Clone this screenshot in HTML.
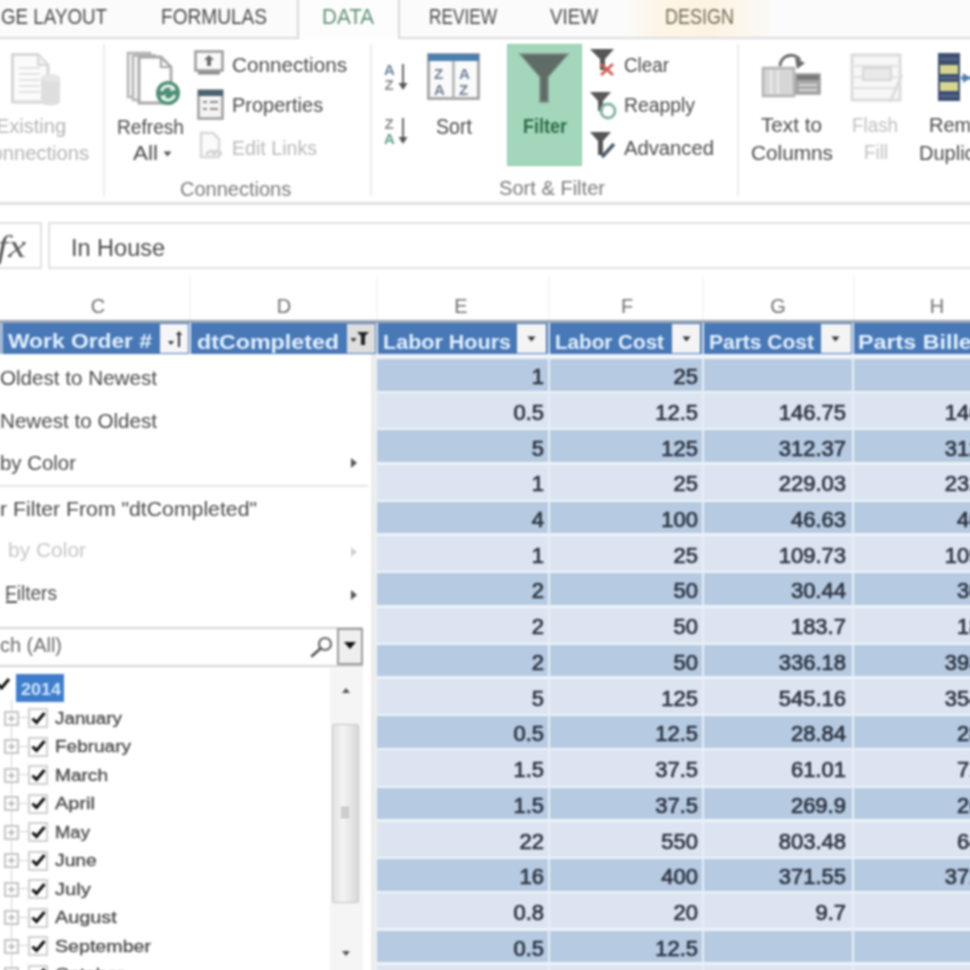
<!DOCTYPE html>
<html><head><meta charset="utf-8"><style>
html,body{margin:0;padding:0;}
body{width:970px;height:970px;overflow:hidden;position:relative;background:#fff;font-family:"Liberation Sans",sans-serif;}
.b{position:absolute;}
.t{position:absolute;white-space:nowrap;line-height:1;transform-origin:0 0;}
svg.b{overflow:visible;}
#w{position:absolute;left:-12px;top:-12px;width:994px;height:994px;overflow:hidden;filter:blur(1px);background:#fff;}
#c{position:absolute;left:12px;top:12px;width:970px;height:970px;}
</style></head><body>
<div id="w"><div id="c"><div class="b" style="left:-12.0px;top:-12.0px;width:994.0px;height:50.0px;background:#fbfbfb"></div>
<div class="b" style="left:624.0px;top:-12.0px;width:146.0px;height:50.0px;background:linear-gradient(90deg,#fbfbfb 0%,#fdf6e8 20%,#fdf3e2 60%,#fbfaf6 100%)"></div>
<div class="b" style="left:-12.0px;top:37.0px;width:994.0px;height:2.0px;background:#dcdcdc"></div>
<div class="b" style="left:297.0px;top:-12.0px;width:103.0px;height:51.0px;background:#fdfdfd;border-left:2px solid #d8d8d8;border-right:2px solid #d8d8d8;box-sizing:border-box"></div>
<div class="t" style="left:1.0px;top:6.1px;font-size:22px;color:#4a4a4a;font-weight:400;font-style:normal;font-family:'Liberation Sans',sans-serif;transform:scaleX(0.8528);">GE LAYOUT</div>
<div class="t" style="left:161.0px;top:6.1px;font-size:22px;color:#4a4a4a;font-weight:400;font-style:normal;font-family:'Liberation Sans',sans-serif;transform:scaleX(0.8672);">FORMULAS</div>
<div class="t" style="left:322.0px;top:6.1px;font-size:22px;color:#5f8f73;font-weight:400;font-style:normal;font-family:'Liberation Sans',sans-serif;transform:scaleX(0.9384);">DATA</div>
<div class="t" style="left:429.0px;top:6.1px;font-size:22px;color:#4a4a4a;font-weight:400;font-style:normal;font-family:'Liberation Sans',sans-serif;transform:scaleX(0.7835);">REVIEW</div>
<div class="t" style="left:550.0px;top:6.1px;font-size:22px;color:#4a4a4a;font-weight:400;font-style:normal;font-family:'Liberation Sans',sans-serif;transform:scaleX(0.8537);">VIEW</div>
<div class="t" style="left:665.0px;top:6.1px;font-size:22px;color:#6e6e55;font-weight:400;font-style:normal;font-family:'Liberation Sans',sans-serif;transform:scaleX(0.8180);">DESIGN</div>
<div class="b" style="left:-12.0px;top:39.0px;width:994.0px;height:163.0px;background:#ffffff"></div>
<div class="b" style="left:-12.0px;top:202.0px;width:994.0px;height:3.0px;background:#e0e0e0"></div>
<div class="b" style="left:103.0px;top:44.0px;width:2.0px;height:152.0px;background:#ececec"></div>
<div class="b" style="left:370.0px;top:44.0px;width:2.0px;height:152.0px;background:#ececec"></div>
<div class="b" style="left:737.0px;top:44.0px;width:2.0px;height:152.0px;background:#ececec"></div>
<div class="t" style="left:-4.0px;top:115.9px;font-size:20px;color:#b4b4b4;font-weight:400;font-style:normal;font-family:'Liberation Sans',sans-serif;">Existing</div>
<div class="t" style="left:-23.0px;top:142.9px;font-size:20px;color:#b4b4b4;font-weight:400;font-style:normal;font-family:'Liberation Sans',sans-serif;transform:scaleX(1.0073);">Connections</div>
<div class="t" style="left:117.0px;top:116.9px;font-size:20px;color:#4a4a4a;font-weight:400;font-style:normal;font-family:'Liberation Sans',sans-serif;transform:scaleX(0.9567);">Refresh</div>
<div class="t" style="left:133.0px;top:142.9px;font-size:20px;color:#4a4a4a;font-weight:400;font-style:normal;font-family:'Liberation Sans',sans-serif;transform:scaleX(1.1247);">All</div>
<svg class="b" style="left:163px;top:151px" width="9" height="6" viewBox="0 0 9 6"><path d="M0.5 0.5 L8.5 0.5 L4.5 5.5 Z" fill="#555"/></svg>
<div class="t" style="left:232.0px;top:54.9px;font-size:20px;color:#4a4a4a;font-weight:400;font-style:normal;font-family:'Liberation Sans',sans-serif;transform:scaleX(1.0343);">Connections</div>
<div class="t" style="left:232.0px;top:94.9px;font-size:20px;color:#4a4a4a;font-weight:400;font-style:normal;font-family:'Liberation Sans',sans-serif;">Properties</div>
<div class="t" style="left:232.0px;top:137.9px;font-size:20px;color:#b8b8b8;font-weight:400;font-style:normal;font-family:'Liberation Sans',sans-serif;transform:scaleX(0.9803);">Edit Links</div>
<div class="t" style="left:180.0px;top:178.9px;font-size:20px;color:#7a7a7a;font-weight:400;font-style:normal;font-family:'Liberation Sans',sans-serif;">Connections</div>
<div class="t" style="left:436.0px;top:116.1px;font-size:22px;color:#4a4a4a;font-weight:400;font-style:normal;font-family:'Liberation Sans',sans-serif;transform:scaleX(0.8922);">Sort</div>
<div class="t" style="left:624.0px;top:54.9px;font-size:20px;color:#4a4a4a;font-weight:400;font-style:normal;font-family:'Liberation Sans',sans-serif;transform:scaleX(0.9415);">Clear</div>
<div class="t" style="left:624.0px;top:94.9px;font-size:20px;color:#4a4a4a;font-weight:400;font-style:normal;font-family:'Liberation Sans',sans-serif;transform:scaleX(0.9675);">Reapply</div>
<div class="t" style="left:624.0px;top:137.9px;font-size:20px;color:#4a4a4a;font-weight:400;font-style:normal;font-family:'Liberation Sans',sans-serif;transform:scaleX(1.0117);">Advanced</div>
<div class="t" style="left:499.0px;top:177.9px;font-size:20px;color:#7a7a7a;font-weight:400;font-style:normal;font-family:'Liberation Sans',sans-serif;transform:scaleX(1.0040);">Sort &amp; Filter</div>
<div class="t" style="left:761.0px;top:114.9px;font-size:20px;color:#4a4a4a;font-weight:400;font-style:normal;font-family:'Liberation Sans',sans-serif;transform:scaleX(1.0354);">Text to</div>
<div class="t" style="left:751.0px;top:142.9px;font-size:20px;color:#4a4a4a;font-weight:400;font-style:normal;font-family:'Liberation Sans',sans-serif;transform:scaleX(1.0390);">Columns</div>
<div class="t" style="left:852.0px;top:114.9px;font-size:20px;color:#c0c0c0;font-weight:400;font-style:normal;font-family:'Liberation Sans',sans-serif;transform:scaleX(0.9405);">Flash</div>
<div class="t" style="left:864.0px;top:141.9px;font-size:20px;color:#c0c0c0;font-weight:400;font-style:normal;font-family:'Liberation Sans',sans-serif;transform:scaleX(0.9394);">Fill</div>
<div class="t" style="left:929.0px;top:114.9px;font-size:20px;color:#4a4a4a;font-weight:400;font-style:normal;font-family:'Liberation Sans',sans-serif;">Remove</div>
<div class="t" style="left:919.0px;top:142.9px;font-size:20px;color:#4a4a4a;font-weight:400;font-style:normal;font-family:'Liberation Sans',sans-serif;">Duplicates</div>
<svg class="b" style="left:10px;top:52px" width="52" height="56" viewBox="0 0 52 56"><path d="M2.5 2.5 H28 L38 13 V50 H2.5 Z" fill="#fbfbfb" stroke="#d6d6d6" stroke-width="3"/><path d="M28 2.5 V13 H38" fill="#eee" stroke="#d6d6d6" stroke-width="2"/><path d="M9 16 H30 M9 22 H30 M9 28 H30 M9 34 H30 M9 40 H30" stroke="#e2e2e2" stroke-width="2"/><path d="M31 26 Q40.5 21 50 26 V51 Q40.5 56 31 51 Z" fill="#dedede"/><ellipse cx="40.5" cy="26" rx="9.5" ry="4" fill="#e6e6e6"/></svg>
<svg class="b" style="left:126px;top:51px" width="60" height="56" viewBox="0 0 60 56"><path d="M2 2 H24 V46 H2 Z" fill="#f6f6f6" stroke="#b4b4b4" stroke-width="2.5"/><path d="M7 4.5 H29 V49 H7 Z" fill="#f6f6f6" stroke="#b4b4b4" stroke-width="2.5"/><path d="M13 6 H35 L45 16 V52 H13 Z" fill="#ffffff" stroke="#a8a8a8" stroke-width="2.8"/><path d="M35 6 V16 H45" fill="none" stroke="#a8a8a8" stroke-width="2.2"/><circle cx="42" cy="42" r="12" fill="#4f8f74"/><path d="M35.5 40 A7 7 0 0 1 48 38" fill="none" stroke="#e9f6ee" stroke-width="3"/><path d="M48.5 44 A7 7 0 0 1 36 46" fill="none" stroke="#e9f6ee" stroke-width="3"/><path d="M45 34 L50 39 L44 40 Z" fill="#e9f6ee"/><path d="M39 50 L34 45 L40 44 Z" fill="#e9f6ee"/></svg>
<svg class="b" style="left:194px;top:50px" width="30" height="26" viewBox="0 0 30 26"><rect x="1.5" y="1.5" width="27" height="19" fill="#fafafa" stroke="#9a9a9a" stroke-width="2.5"/><path d="M15 5 L20 10 H17 V16 H13 V10 H10 Z" fill="#6a6a6a"/><path d="M4 23 H26" stroke="#8a8a8a" stroke-width="3"/></svg>
<svg class="b" style="left:197px;top:89px" width="27" height="31" viewBox="0 0 27 31"><rect x="1.5" y="1.5" width="24" height="28" fill="#f4f4f4" stroke="#9c9c9c" stroke-width="2.5"/><rect x="1" y="1" width="25" height="6" fill="#4a6272"/><path d="M6 13 H10 M13 13 H21 M6 20 H10 M13 20 H21" stroke="#8a8a8a" stroke-width="2.2"/></svg>
<svg class="b" style="left:199px;top:131px" width="26" height="30" viewBox="0 0 26 30"><path d="M2 2 H14 L20 8 V26 H2 Z" fill="#fbfbfb" stroke="#d8d8d8" stroke-width="2.5"/><path d="M8 24 a4 4 0 0 1 8 0 M14 24 a4 4 0 0 1 8 0" fill="none" stroke="#cfcfcf" stroke-width="2.5"/></svg>
<svg class="b" style="left:384px;top:62px" width="28" height="32" viewBox="0 0 28 32"><text x="0" y="13" font-family="Liberation Sans" font-size="15" font-weight="700" fill="#6a7f99">A</text><text x="0.5" y="28" font-family="Liberation Sans" font-size="15" font-weight="700" fill="#8a8a8a">Z</text><path d="M19 2 V24" stroke="#666" stroke-width="2"/><path d="M14.5 21 L19 28 L23.5 21 Z" fill="#555"/></svg>
<svg class="b" style="left:384px;top:116px" width="28" height="32" viewBox="0 0 28 32"><text x="0.5" y="13" font-family="Liberation Sans" font-size="15" font-weight="700" fill="#8a8a8a">Z</text><text x="0" y="28" font-family="Liberation Sans" font-size="15" font-weight="700" fill="#5f9f8c">A</text><path d="M19 2 V24" stroke="#666" stroke-width="2"/><path d="M14.5 21 L19 28 L23.5 21 Z" fill="#555"/></svg>
<svg class="b" style="left:427px;top:53px" width="53" height="47" viewBox="0 0 53 47"><rect x="1.5" y="1.5" width="50" height="44" fill="#fafafa" stroke="#a8a8a8" stroke-width="3"/><rect x="1" y="1" width="51" height="7" fill="#4a7fae"/><path d="M26.5 8 V45" stroke="#b0b0b0" stroke-width="2.5"/><text x="7" y="26" font-family="Liberation Sans" font-size="15" font-weight="700" fill="#6f7f92">Z</text><text x="7" y="42" font-family="Liberation Sans" font-size="15" font-weight="700" fill="#6f7f92">A</text><text x="32" y="26" font-family="Liberation Sans" font-size="15" font-weight="700" fill="#6f7f92">A</text><text x="32" y="42" font-family="Liberation Sans" font-size="15" font-weight="700" fill="#6f7f92">Z</text></svg>
<div class="b" style="left:507.0px;top:44.0px;width:75.0px;height:122.0px;background:#a3d6bb;border:1.5px solid #93cbac;box-sizing:border-box"></div>
<svg class="b" style="left:518px;top:52px" width="52" height="52" viewBox="0 0 52 52"><path d="M2 2 H50 L30 25 V50 H22 V25 Z" fill="#5f6c66" stroke="#7f8f88" stroke-width="1.5"/></svg>
<div class="t" style="left:523.0px;top:115.9px;font-size:20px;color:#2c6b46;font-weight:700;font-style:normal;font-family:'Liberation Sans',sans-serif;transform:scaleX(0.8999);">Filter</div>
<svg class="b" style="left:589px;top:48px" width="28" height="30" viewBox="0 0 28 30"><path d="M1 1 H25 L16 11 V22 H11 V11 Z" fill="#565656"/><path d="M12 16 L24 27 M24 16 L12 27" stroke="#d0605a" stroke-width="3"/></svg>
<svg class="b" style="left:589px;top:91px" width="28" height="30" viewBox="0 0 28 30"><path d="M1 1 H22 L14 10 V20 H9 V10 Z" fill="#585858"/><circle cx="19" cy="20" r="7" fill="none" stroke="#7fb59b" stroke-width="2.8"/></svg>
<svg class="b" style="left:589px;top:131px" width="28" height="30" viewBox="0 0 28 30"><path d="M1 1 H22 L14 10 V24 H9 V10 Z" fill="#555"/><path d="M13 26 L25 13" stroke="#4a5a6e" stroke-width="3.5"/></svg>
<svg class="b" style="left:760px;top:52px" width="62" height="48" viewBox="0 0 62 48"><path d="M20 14 A11 11 0 0 1 40 8" fill="none" stroke="#6a6a6a" stroke-width="3"/><path d="M35 6 L45 11 L37 17 Z" fill="#6a6a6a"/><rect x="3" y="16" width="31" height="28" fill="#d6d6d6" stroke="#b2b2b2" stroke-width="2.5"/><path d="M11 18 V42 M18 18 V42" stroke="#ececec" stroke-width="2"/><rect x="36" y="22" width="24" height="20" fill="#a6a6a6" stroke="#9a9a9a" stroke-width="1.5"/><rect x="37" y="23" width="22" height="5" fill="#7a7a7a"/><path d="M39 33 H57 M39 38 H57" stroke="#d8d8d8" stroke-width="2"/></svg>
<svg class="b" style="left:850px;top:53px" width="56" height="50" viewBox="0 0 56 50"><rect x="2" y="2" width="48" height="45" fill="#f7f7f7" stroke="#dcdcdc" stroke-width="3"/><path d="M4 13 H48 M4 24 H48 M4 35 H48" stroke="#e0e0e0" stroke-width="2"/><rect x="13" y="15" width="28" height="12" fill="#e9e9e9" stroke="#d6d6d6" stroke-width="2"/><path d="M52 22 L40 49" stroke="#dcdcdc" stroke-width="3"/></svg>
<svg class="b" style="left:937px;top:52px" width="34" height="50" viewBox="0 0 34 50"><rect x="1" y="1" width="22" height="48" fill="#3d4f73"/><rect x="3" y="13" width="18" height="9" fill="#d7d68e"/><rect x="3" y="30" width="18" height="9" fill="#d7d68e"/><path d="M3 7 H21 M3 26 H21 M3 44 H21" stroke="#5a6a8a" stroke-width="2"/><path d="M24 26 H34" stroke="#4a7fae" stroke-width="3"/><path d="M26 21 L33 26 L26 31" fill="#4a7fae"/></svg>
<div class="b" style="left:-12.0px;top:205.0px;width:994.0px;height:65.0px;background:#ffffff"></div>
<div class="b" style="left:-14.0px;top:222.0px;width:56.0px;height:47.0px;background:#fff;border:2.5px solid #e0e0e0;box-sizing:border-box"></div>
<div class="b" style="left:48.0px;top:222.0px;width:950.0px;height:47.0px;background:#fff;border:2.5px solid #e0e0e0;box-sizing:border-box"></div>
<div class="t" style="left:-3.0px;top:231.4px;font-size:31px;color:#555;font-weight:400;font-style:italic;font-family:'Liberation Serif',serif;transform:scaleX(1.2963);">fx</div>
<div class="t" style="left:71.0px;top:236.7px;font-size:23px;color:#4a4a4a;font-weight:400;font-style:normal;font-family:'Liberation Sans',sans-serif;transform:scaleX(1.0211);">In House</div>
<div class="b" style="left:-12.0px;top:270.0px;width:994.0px;height:51.0px;background:#ffffff"></div>
<div class="b" style="left:189.0px;top:276.0px;width:2.0px;height:45.0px;background:#f5f5f5"></div>
<div class="b" style="left:376.0px;top:276.0px;width:2.0px;height:45.0px;background:#f5f5f5"></div>
<div class="b" style="left:548.0px;top:276.0px;width:2.0px;height:45.0px;background:#f5f5f5"></div>
<div class="b" style="left:702.0px;top:276.0px;width:2.0px;height:45.0px;background:#f5f5f5"></div>
<div class="b" style="left:853.0px;top:276.0px;width:2.0px;height:45.0px;background:#f5f5f5"></div>
<div class="t" style="left:90.8px;top:295.9px;font-size:20px;color:#707070;font-weight:400;font-style:normal;font-family:'Liberation Sans',sans-serif;">C</div>
<div class="t" style="left:276.8px;top:295.9px;font-size:20px;color:#707070;font-weight:400;font-style:normal;font-family:'Liberation Sans',sans-serif;">D</div>
<div class="t" style="left:454.3px;top:295.9px;font-size:20px;color:#707070;font-weight:400;font-style:normal;font-family:'Liberation Sans',sans-serif;">E</div>
<div class="t" style="left:620.9px;top:295.9px;font-size:20px;color:#707070;font-weight:400;font-style:normal;font-family:'Liberation Sans',sans-serif;">F</div>
<div class="t" style="left:770.2px;top:295.9px;font-size:20px;color:#707070;font-weight:400;font-style:normal;font-family:'Liberation Sans',sans-serif;">G</div>
<div class="t" style="left:929.8px;top:295.9px;font-size:20px;color:#707070;font-weight:400;font-style:normal;font-family:'Liberation Sans',sans-serif;">H</div>
<div class="b" style="left:376.0px;top:322.0px;width:620.0px;height:680.0px;background:#eef3f9"></div>
<div class="b" style="left:-12.0px;top:323.0px;width:994.0px;height:31.0px;background:#4878b6"></div>
<div class="b" style="left:-12.0px;top:320.0px;width:994.0px;height:3.0px;background:#9aa6b6"></div>
<div class="b" style="left:377.0px;top:359.0px;width:620.0px;height:31.5px;background:#b6cae1"></div>
<div class="b" style="left:377.0px;top:393.2px;width:620.0px;height:35.2px;background:#dbe4f0"></div>
<div class="b" style="left:377.0px;top:430.4px;width:620.0px;height:31.5px;background:#b6cae1"></div>
<div class="b" style="left:377.0px;top:464.7px;width:620.0px;height:35.2px;background:#dbe4f0"></div>
<div class="b" style="left:377.0px;top:501.9px;width:620.0px;height:31.5px;background:#b6cae1"></div>
<div class="b" style="left:377.0px;top:536.1px;width:620.0px;height:35.2px;background:#dbe4f0"></div>
<div class="b" style="left:377.0px;top:573.3px;width:620.0px;height:31.5px;background:#b6cae1"></div>
<div class="b" style="left:377.0px;top:607.5px;width:620.0px;height:35.2px;background:#dbe4f0"></div>
<div class="b" style="left:377.0px;top:644.8px;width:620.0px;height:31.5px;background:#b6cae1"></div>
<div class="b" style="left:377.0px;top:679.0px;width:620.0px;height:35.2px;background:#dbe4f0"></div>
<div class="b" style="left:377.0px;top:716.2px;width:620.0px;height:31.5px;background:#b6cae1"></div>
<div class="b" style="left:377.0px;top:750.4px;width:620.0px;height:35.2px;background:#dbe4f0"></div>
<div class="b" style="left:377.0px;top:787.6px;width:620.0px;height:31.5px;background:#b6cae1"></div>
<div class="b" style="left:377.0px;top:821.9px;width:620.0px;height:35.2px;background:#dbe4f0"></div>
<div class="b" style="left:377.0px;top:859.1px;width:620.0px;height:31.5px;background:#b6cae1"></div>
<div class="b" style="left:377.0px;top:893.3px;width:620.0px;height:35.2px;background:#dbe4f0"></div>
<div class="b" style="left:377.0px;top:930.5px;width:620.0px;height:31.5px;background:#b6cae1"></div>
<div class="b" style="left:377.0px;top:964.7px;width:620.0px;height:35.2px;background:#dbe4f0"></div>
<div class="b" style="left:377.0px;top:1002.0px;width:620.0px;height:31.5px;background:#b6cae1"></div>
<div class="b" style="left:548.0px;top:355.0px;width:2.0px;height:650.0px;background:#e9eff7"></div>
<div class="b" style="left:702.0px;top:355.0px;width:2.0px;height:650.0px;background:#e9eff7"></div>
<div class="b" style="left:852.0px;top:355.0px;width:2.0px;height:650.0px;background:#e9eff7"></div>
<div class="b" style="left:189.0px;top:323.0px;width:2.0px;height:31.0px;background:#dfe6ef"></div>
<div class="b" style="left:376.0px;top:323.0px;width:2.0px;height:31.0px;background:#dfe6ef"></div>
<div class="b" style="left:548.0px;top:323.0px;width:2.0px;height:31.0px;background:#dfe6ef"></div>
<div class="b" style="left:702.0px;top:323.0px;width:2.0px;height:31.0px;background:#dfe6ef"></div>
<div class="b" style="left:852.0px;top:323.0px;width:2.0px;height:31.0px;background:#dfe6ef"></div>
<div class="t" style="left:531.8px;top:366.1px;font-size:22px;color:#2b3240;font-weight:400;font-style:normal;font-family:'Liberation Sans',sans-serif;-webkit-text-stroke:0.7px #2b3240;">1</div>
<div class="t" style="left:673.5px;top:366.1px;font-size:22px;color:#2b3240;font-weight:400;font-style:normal;font-family:'Liberation Sans',sans-serif;-webkit-text-stroke:0.7px #2b3240;">25</div>
<div class="t" style="left:513.4px;top:401.8px;font-size:22px;color:#2b3240;font-weight:400;font-style:normal;font-family:'Liberation Sans',sans-serif;-webkit-text-stroke:0.7px #2b3240;">0.5</div>
<div class="t" style="left:655.2px;top:401.8px;font-size:22px;color:#2b3240;font-weight:400;font-style:normal;font-family:'Liberation Sans',sans-serif;-webkit-text-stroke:0.7px #2b3240;">12.5</div>
<div class="t" style="left:778.7px;top:401.8px;font-size:22px;color:#2b3240;font-weight:400;font-style:normal;font-family:'Liberation Sans',sans-serif;-webkit-text-stroke:0.7px #2b3240;">146.75</div>
<div class="t" style="left:944.7px;top:401.8px;font-size:22px;color:#2b3240;font-weight:400;font-style:normal;font-family:'Liberation Sans',sans-serif;-webkit-text-stroke:0.7px #2b3240;">146.75</div>
<div class="t" style="left:531.8px;top:437.5px;font-size:22px;color:#2b3240;font-weight:400;font-style:normal;font-family:'Liberation Sans',sans-serif;-webkit-text-stroke:0.7px #2b3240;">5</div>
<div class="t" style="left:661.3px;top:437.5px;font-size:22px;color:#2b3240;font-weight:400;font-style:normal;font-family:'Liberation Sans',sans-serif;-webkit-text-stroke:0.7px #2b3240;">125</div>
<div class="t" style="left:778.7px;top:437.5px;font-size:22px;color:#2b3240;font-weight:400;font-style:normal;font-family:'Liberation Sans',sans-serif;-webkit-text-stroke:0.7px #2b3240;">312.37</div>
<div class="t" style="left:944.7px;top:437.5px;font-size:22px;color:#2b3240;font-weight:400;font-style:normal;font-family:'Liberation Sans',sans-serif;-webkit-text-stroke:0.7px #2b3240;">312.37</div>
<div class="t" style="left:531.8px;top:473.2px;font-size:22px;color:#2b3240;font-weight:400;font-style:normal;font-family:'Liberation Sans',sans-serif;-webkit-text-stroke:0.7px #2b3240;">1</div>
<div class="t" style="left:673.5px;top:473.2px;font-size:22px;color:#2b3240;font-weight:400;font-style:normal;font-family:'Liberation Sans',sans-serif;-webkit-text-stroke:0.7px #2b3240;">25</div>
<div class="t" style="left:778.7px;top:473.2px;font-size:22px;color:#2b3240;font-weight:400;font-style:normal;font-family:'Liberation Sans',sans-serif;-webkit-text-stroke:0.7px #2b3240;">229.03</div>
<div class="t" style="left:944.7px;top:473.2px;font-size:22px;color:#2b3240;font-weight:400;font-style:normal;font-family:'Liberation Sans',sans-serif;-webkit-text-stroke:0.7px #2b3240;">231.24</div>
<div class="t" style="left:531.8px;top:509.0px;font-size:22px;color:#2b3240;font-weight:400;font-style:normal;font-family:'Liberation Sans',sans-serif;-webkit-text-stroke:0.7px #2b3240;">4</div>
<div class="t" style="left:661.3px;top:509.0px;font-size:22px;color:#2b3240;font-weight:400;font-style:normal;font-family:'Liberation Sans',sans-serif;-webkit-text-stroke:0.7px #2b3240;">100</div>
<div class="t" style="left:790.9px;top:509.0px;font-size:22px;color:#2b3240;font-weight:400;font-style:normal;font-family:'Liberation Sans',sans-serif;-webkit-text-stroke:0.7px #2b3240;">46.63</div>
<div class="t" style="left:956.9px;top:509.0px;font-size:22px;color:#2b3240;font-weight:400;font-style:normal;font-family:'Liberation Sans',sans-serif;-webkit-text-stroke:0.7px #2b3240;">46.63</div>
<div class="t" style="left:531.8px;top:544.7px;font-size:22px;color:#2b3240;font-weight:400;font-style:normal;font-family:'Liberation Sans',sans-serif;-webkit-text-stroke:0.7px #2b3240;">1</div>
<div class="t" style="left:673.5px;top:544.7px;font-size:22px;color:#2b3240;font-weight:400;font-style:normal;font-family:'Liberation Sans',sans-serif;-webkit-text-stroke:0.7px #2b3240;">25</div>
<div class="t" style="left:778.7px;top:544.7px;font-size:22px;color:#2b3240;font-weight:400;font-style:normal;font-family:'Liberation Sans',sans-serif;-webkit-text-stroke:0.7px #2b3240;">109.73</div>
<div class="t" style="left:944.7px;top:544.7px;font-size:22px;color:#2b3240;font-weight:400;font-style:normal;font-family:'Liberation Sans',sans-serif;-webkit-text-stroke:0.7px #2b3240;">109.73</div>
<div class="t" style="left:531.8px;top:580.4px;font-size:22px;color:#2b3240;font-weight:400;font-style:normal;font-family:'Liberation Sans',sans-serif;-webkit-text-stroke:0.7px #2b3240;">2</div>
<div class="t" style="left:673.5px;top:580.4px;font-size:22px;color:#2b3240;font-weight:400;font-style:normal;font-family:'Liberation Sans',sans-serif;-webkit-text-stroke:0.7px #2b3240;">50</div>
<div class="t" style="left:790.9px;top:580.4px;font-size:22px;color:#2b3240;font-weight:400;font-style:normal;font-family:'Liberation Sans',sans-serif;-webkit-text-stroke:0.7px #2b3240;">30.44</div>
<div class="t" style="left:956.9px;top:580.4px;font-size:22px;color:#2b3240;font-weight:400;font-style:normal;font-family:'Liberation Sans',sans-serif;-webkit-text-stroke:0.7px #2b3240;">30.44</div>
<div class="t" style="left:531.8px;top:616.1px;font-size:22px;color:#2b3240;font-weight:400;font-style:normal;font-family:'Liberation Sans',sans-serif;-webkit-text-stroke:0.7px #2b3240;">2</div>
<div class="t" style="left:673.5px;top:616.1px;font-size:22px;color:#2b3240;font-weight:400;font-style:normal;font-family:'Liberation Sans',sans-serif;-webkit-text-stroke:0.7px #2b3240;">50</div>
<div class="t" style="left:790.9px;top:616.1px;font-size:22px;color:#2b3240;font-weight:400;font-style:normal;font-family:'Liberation Sans',sans-serif;-webkit-text-stroke:0.7px #2b3240;">183.7</div>
<div class="t" style="left:956.9px;top:616.1px;font-size:22px;color:#2b3240;font-weight:400;font-style:normal;font-family:'Liberation Sans',sans-serif;-webkit-text-stroke:0.7px #2b3240;">183.7</div>
<div class="t" style="left:531.8px;top:651.9px;font-size:22px;color:#2b3240;font-weight:400;font-style:normal;font-family:'Liberation Sans',sans-serif;-webkit-text-stroke:0.7px #2b3240;">2</div>
<div class="t" style="left:673.5px;top:651.9px;font-size:22px;color:#2b3240;font-weight:400;font-style:normal;font-family:'Liberation Sans',sans-serif;-webkit-text-stroke:0.7px #2b3240;">50</div>
<div class="t" style="left:778.7px;top:651.9px;font-size:22px;color:#2b3240;font-weight:400;font-style:normal;font-family:'Liberation Sans',sans-serif;-webkit-text-stroke:0.7px #2b3240;">336.18</div>
<div class="t" style="left:944.7px;top:651.9px;font-size:22px;color:#2b3240;font-weight:400;font-style:normal;font-family:'Liberation Sans',sans-serif;-webkit-text-stroke:0.7px #2b3240;">393.18</div>
<div class="t" style="left:531.8px;top:687.6px;font-size:22px;color:#2b3240;font-weight:400;font-style:normal;font-family:'Liberation Sans',sans-serif;-webkit-text-stroke:0.7px #2b3240;">5</div>
<div class="t" style="left:661.3px;top:687.6px;font-size:22px;color:#2b3240;font-weight:400;font-style:normal;font-family:'Liberation Sans',sans-serif;-webkit-text-stroke:0.7px #2b3240;">125</div>
<div class="t" style="left:778.7px;top:687.6px;font-size:22px;color:#2b3240;font-weight:400;font-style:normal;font-family:'Liberation Sans',sans-serif;-webkit-text-stroke:0.7px #2b3240;">545.16</div>
<div class="t" style="left:944.7px;top:687.6px;font-size:22px;color:#2b3240;font-weight:400;font-style:normal;font-family:'Liberation Sans',sans-serif;-webkit-text-stroke:0.7px #2b3240;">354.16</div>
<div class="t" style="left:513.4px;top:723.3px;font-size:22px;color:#2b3240;font-weight:400;font-style:normal;font-family:'Liberation Sans',sans-serif;-webkit-text-stroke:0.7px #2b3240;">0.5</div>
<div class="t" style="left:655.2px;top:723.3px;font-size:22px;color:#2b3240;font-weight:400;font-style:normal;font-family:'Liberation Sans',sans-serif;-webkit-text-stroke:0.7px #2b3240;">12.5</div>
<div class="t" style="left:790.9px;top:723.3px;font-size:22px;color:#2b3240;font-weight:400;font-style:normal;font-family:'Liberation Sans',sans-serif;-webkit-text-stroke:0.7px #2b3240;">28.84</div>
<div class="t" style="left:956.9px;top:723.3px;font-size:22px;color:#2b3240;font-weight:400;font-style:normal;font-family:'Liberation Sans',sans-serif;-webkit-text-stroke:0.7px #2b3240;">28.84</div>
<div class="t" style="left:513.4px;top:759.0px;font-size:22px;color:#2b3240;font-weight:400;font-style:normal;font-family:'Liberation Sans',sans-serif;-webkit-text-stroke:0.7px #2b3240;">1.5</div>
<div class="t" style="left:655.2px;top:759.0px;font-size:22px;color:#2b3240;font-weight:400;font-style:normal;font-family:'Liberation Sans',sans-serif;-webkit-text-stroke:0.7px #2b3240;">37.5</div>
<div class="t" style="left:790.9px;top:759.0px;font-size:22px;color:#2b3240;font-weight:400;font-style:normal;font-family:'Liberation Sans',sans-serif;-webkit-text-stroke:0.7px #2b3240;">61.01</div>
<div class="t" style="left:956.9px;top:759.0px;font-size:22px;color:#2b3240;font-weight:400;font-style:normal;font-family:'Liberation Sans',sans-serif;-webkit-text-stroke:0.7px #2b3240;">71.01</div>
<div class="t" style="left:513.4px;top:794.7px;font-size:22px;color:#2b3240;font-weight:400;font-style:normal;font-family:'Liberation Sans',sans-serif;-webkit-text-stroke:0.7px #2b3240;">1.5</div>
<div class="t" style="left:655.2px;top:794.7px;font-size:22px;color:#2b3240;font-weight:400;font-style:normal;font-family:'Liberation Sans',sans-serif;-webkit-text-stroke:0.7px #2b3240;">37.5</div>
<div class="t" style="left:790.9px;top:794.7px;font-size:22px;color:#2b3240;font-weight:400;font-style:normal;font-family:'Liberation Sans',sans-serif;-webkit-text-stroke:0.7px #2b3240;">269.9</div>
<div class="t" style="left:956.9px;top:794.7px;font-size:22px;color:#2b3240;font-weight:400;font-style:normal;font-family:'Liberation Sans',sans-serif;-webkit-text-stroke:0.7px #2b3240;">269.9</div>
<div class="t" style="left:519.5px;top:830.5px;font-size:22px;color:#2b3240;font-weight:400;font-style:normal;font-family:'Liberation Sans',sans-serif;-webkit-text-stroke:0.7px #2b3240;">22</div>
<div class="t" style="left:661.3px;top:830.5px;font-size:22px;color:#2b3240;font-weight:400;font-style:normal;font-family:'Liberation Sans',sans-serif;-webkit-text-stroke:0.7px #2b3240;">550</div>
<div class="t" style="left:778.7px;top:830.5px;font-size:22px;color:#2b3240;font-weight:400;font-style:normal;font-family:'Liberation Sans',sans-serif;-webkit-text-stroke:0.7px #2b3240;">803.48</div>
<div class="t" style="left:956.9px;top:830.5px;font-size:22px;color:#2b3240;font-weight:400;font-style:normal;font-family:'Liberation Sans',sans-serif;-webkit-text-stroke:0.7px #2b3240;">64.48</div>
<div class="t" style="left:519.5px;top:866.2px;font-size:22px;color:#2b3240;font-weight:400;font-style:normal;font-family:'Liberation Sans',sans-serif;-webkit-text-stroke:0.7px #2b3240;">16</div>
<div class="t" style="left:661.3px;top:866.2px;font-size:22px;color:#2b3240;font-weight:400;font-style:normal;font-family:'Liberation Sans',sans-serif;-webkit-text-stroke:0.7px #2b3240;">400</div>
<div class="t" style="left:778.7px;top:866.2px;font-size:22px;color:#2b3240;font-weight:400;font-style:normal;font-family:'Liberation Sans',sans-serif;-webkit-text-stroke:0.7px #2b3240;">371.55</div>
<div class="t" style="left:944.7px;top:866.2px;font-size:22px;color:#2b3240;font-weight:400;font-style:normal;font-family:'Liberation Sans',sans-serif;-webkit-text-stroke:0.7px #2b3240;">371.55</div>
<div class="t" style="left:513.4px;top:901.9px;font-size:22px;color:#2b3240;font-weight:400;font-style:normal;font-family:'Liberation Sans',sans-serif;-webkit-text-stroke:0.7px #2b3240;">0.8</div>
<div class="t" style="left:673.5px;top:901.9px;font-size:22px;color:#2b3240;font-weight:400;font-style:normal;font-family:'Liberation Sans',sans-serif;-webkit-text-stroke:0.7px #2b3240;">20</div>
<div class="t" style="left:815.4px;top:901.9px;font-size:22px;color:#2b3240;font-weight:400;font-style:normal;font-family:'Liberation Sans',sans-serif;-webkit-text-stroke:0.7px #2b3240;">9.7</div>
<div class="t" style="left:513.4px;top:937.6px;font-size:22px;color:#2b3240;font-weight:400;font-style:normal;font-family:'Liberation Sans',sans-serif;-webkit-text-stroke:0.7px #2b3240;">0.5</div>
<div class="t" style="left:655.2px;top:937.6px;font-size:22px;color:#2b3240;font-weight:400;font-style:normal;font-family:'Liberation Sans',sans-serif;-webkit-text-stroke:0.7px #2b3240;">12.5</div>
<div class="b" style="left:-12.0px;top:323.0px;width:15.0px;height:31.0px;background:#a3b9d8"></div>
<div class="t" style="left:8.0px;top:330.9px;font-size:20px;color:#e4f1ff;font-weight:700;font-style:normal;font-family:'Liberation Sans',sans-serif;transform:scaleX(1.1398);">Work Order #</div>
<div class="t" style="left:197.0px;top:331.9px;font-size:20px;color:#e4f1ff;font-weight:700;font-style:normal;font-family:'Liberation Sans',sans-serif;transform:scaleX(1.1618);">dtCompleted</div>
<div class="t" style="left:383.0px;top:331.9px;font-size:20px;color:#e4f1ff;font-weight:700;font-style:normal;font-family:'Liberation Sans',sans-serif;transform:scaleX(1.0765);">Labor Hours</div>
<div class="t" style="left:555.0px;top:331.9px;font-size:20px;color:#e4f1ff;font-weight:700;font-style:normal;font-family:'Liberation Sans',sans-serif;transform:scaleX(1.0326);">Labor Cost</div>
<div class="t" style="left:709.0px;top:331.9px;font-size:20px;color:#e4f1ff;font-weight:700;font-style:normal;font-family:'Liberation Sans',sans-serif;transform:scaleX(1.0497);">Parts Cost</div>
<div class="t" style="left:858.0px;top:331.9px;font-size:20px;color:#e4f1ff;font-weight:700;font-style:normal;font-family:'Liberation Sans',sans-serif;transform:scaleX(1.1632);">Parts Billed</div>
<div class="b" style="left:160.0px;top:324.0px;width:28.0px;height:29.0px;background:#f6f6f6"></div>
<div class="b" style="left:347.0px;top:324.0px;width:28.0px;height:29.0px;background:#dedede"></div>
<div class="b" style="left:517.0px;top:324.0px;width:29.0px;height:29.0px;background:#f4f4f4"></div>
<div class="b" style="left:672.0px;top:324.0px;width:28.0px;height:29.0px;background:#f4f4f4"></div>
<div class="b" style="left:821.0px;top:324.0px;width:30.0px;height:29.0px;background:#f4f4f4"></div>
<svg class="b" style="left:527px;top:336px" width="9" height="6" viewBox="0 0 9 6"><path d="M0.5 0.5 L8.5 0.5 L4.5 5.5 Z" fill="#333"/></svg>
<svg class="b" style="left:682px;top:336px" width="9" height="6" viewBox="0 0 9 6"><path d="M0.5 0.5 L8.5 0.5 L4.5 5.5 Z" fill="#333"/></svg>
<svg class="b" style="left:831px;top:336px" width="9" height="6" viewBox="0 0 9 6"><path d="M0.5 0.5 L8.5 0.5 L4.5 5.5 Z" fill="#333"/></svg>
<svg class="b" style="left:166px;top:330px" width="18" height="20" viewBox="0 0 18 20"><path d="M2 11 L8 11 L5 15 Z" fill="#333"/><path d="M13 2 V17" stroke="#333" stroke-width="2"/><path d="M10 5 L13 1 L16 5" fill="#333"/></svg>
<svg class="b" style="left:350px;top:330px" width="22" height="18" viewBox="0 0 22 18"><path d="M0.5 8 L6.5 8 L3.5 12 Z" fill="#333"/><path d="M7 2 H19 L15 6 V15 H11 V6 Z" fill="#222"/></svg>
<div class="b" style="left:-12.0px;top:354.0px;width:385.0px;height:650.0px;background:#ffffff"></div>
<div class="b" style="left:371.0px;top:354.0px;width:5.0px;height:650.0px;background:#ececec"></div>
<div class="t" style="left:0.0px;top:367.0px;font-size:21px;color:#4a4a4a;font-weight:400;font-style:normal;font-family:'Liberation Sans',sans-serif;transform:scaleX(0.9819);">Oldest to Newest</div>
<div class="t" style="left:0.0px;top:410.0px;font-size:21px;color:#4a4a4a;font-weight:400;font-style:normal;font-family:'Liberation Sans',sans-serif;transform:scaleX(0.9819);">Newest to Oldest</div>
<div class="t" style="left:0.0px;top:452.0px;font-size:21px;color:#4a4a4a;font-weight:400;font-style:normal;font-family:'Liberation Sans',sans-serif;transform:scaleX(0.9719);">by Color</div>
<div class="t" style="left:0.0px;top:498.0px;font-size:21px;color:#4a4a4a;font-weight:400;font-style:normal;font-family:'Liberation Sans',sans-serif;transform:scaleX(1.0112);">r Filter From &quot;dtCompleted&quot;</div>
<div class="t" style="left:8.0px;top:539.0px;font-size:21px;color:#c6c6c6;font-weight:400;font-style:normal;font-family:'Liberation Sans',sans-serif;transform:scaleX(0.9975);">by Color</div>
<div class="t" style="left:5.0px;top:582.0px;font-size:21px;color:#4a4a4a;font-weight:400;font-style:normal;font-family:'Liberation Sans',sans-serif;transform:scaleX(0.9096);">Filters</div>
<div class="b" style="left:6.0px;top:601.0px;width:11.0px;height:2.0px;background:#4a4a4a"></div>
<div class="b" style="left:-12.0px;top:485.0px;width:380.0px;height:2.0px;background:#e6e6e6"></div>
<svg class="b" style="left:350px;top:457px" width="8" height="12" viewBox="0 0 8 12"><path d="M1 1 L7 6 L1 11 Z" fill="#555"/></svg>
<svg class="b" style="left:350px;top:546px" width="8" height="12" viewBox="0 0 8 12"><path d="M1 1 L7 6 L1 11 Z" fill="#cfcfcf"/></svg>
<svg class="b" style="left:350px;top:589px" width="8" height="12" viewBox="0 0 8 12"><path d="M1 1 L7 6 L1 11 Z" fill="#555"/></svg>
<div class="b" style="left:-14.0px;top:627.0px;width:377.0px;height:40.0px;background:#fff;border:2px solid #d4d4d4;box-sizing:border-box"></div>
<div class="t" style="left:0.0px;top:634.0px;font-size:21px;color:#6a6a6a;font-weight:400;font-style:normal;font-family:'Liberation Sans',sans-serif;transform:scaleX(0.9489);">ch (All)</div>
<div class="b" style="left:337.0px;top:628.0px;width:26.0px;height:37.0px;background:#efefef;border:2px solid #9a9a9a;box-sizing:border-box"></div>
<svg class="b" style="left:343px;top:641px" width="14" height="9" viewBox="0 0 14 9"><path d="M1 1 L13 1 L7 8 Z" fill="#111"/></svg>
<svg class="b" style="left:310px;top:636px" width="24" height="22" viewBox="0 0 24 22"><circle cx="15" cy="8" r="6" fill="none" stroke="#666" stroke-width="2.2"/><path d="M10.5 12.5 L2 20" stroke="#555" stroke-width="2.6" stroke-linecap="round"/></svg>
<div class="b" style="left:16.0px;top:674.0px;width:48.0px;height:28.0px;background:#3f7dcb"></div>
<div class="t" style="left:21.0px;top:680.6px;font-size:17px;color:#cfe6ff;font-weight:700;font-style:normal;font-family:'Liberation Sans',sans-serif;transform:scaleX(1.0577);">2014</div>
<div class="b" style="left:11.0px;top:700.0px;width:1.0px;height:300.0px;background:#d4d4d4"></div>
<div class="t" style="left:55.0px;top:710.8px;font-size:16px;color:#484848;font-weight:400;font-style:normal;font-family:'Liberation Sans',sans-serif;transform:scaleX(1.1770);-webkit-text-stroke:0.3px #484848;">January</div>
<div class="b" style="left:28.0px;top:708.3px;width:20.0px;height:20.0px;background:#fff;border:2px solid #cfcfcf;box-sizing:border-box"></div>
<svg class="b" style="left:31px;top:710.8px" width="15" height="14" viewBox="0 0 15 14"><path d="M1.5 7.5 L5.5 11.5 L13.5 2" fill="none" stroke="#111" stroke-width="3"/></svg>
<div class="b" style="left:4.0px;top:710.8px;width:15.0px;height:15.0px;background:#fff;border:2px solid #c4c4c4;box-sizing:border-box"></div>
<div class="b" style="left:19.0px;top:717.3px;width:9.0px;height:1.0px;background:#d4d4d4"></div>
<svg class="b" style="left:4px;top:710.8px" width="15" height="15" viewBox="0 0 15 15"><path d="M4 7.5 H11 M7.5 4 V11" stroke="#b0b0b0" stroke-width="1.5"/></svg>
<div class="t" style="left:55.0px;top:739.3px;font-size:16px;color:#484848;font-weight:400;font-style:normal;font-family:'Liberation Sans',sans-serif;transform:scaleX(1.1870);-webkit-text-stroke:0.3px #484848;">February</div>
<div class="b" style="left:28.0px;top:736.8px;width:20.0px;height:20.0px;background:#fff;border:2px solid #cfcfcf;box-sizing:border-box"></div>
<svg class="b" style="left:31px;top:739.3px" width="15" height="14" viewBox="0 0 15 14"><path d="M1.5 7.5 L5.5 11.5 L13.5 2" fill="none" stroke="#111" stroke-width="3"/></svg>
<div class="b" style="left:4.0px;top:739.3px;width:15.0px;height:15.0px;background:#fff;border:2px solid #c4c4c4;box-sizing:border-box"></div>
<div class="b" style="left:19.0px;top:745.8px;width:9.0px;height:1.0px;background:#d4d4d4"></div>
<svg class="b" style="left:4px;top:739.3px" width="15" height="15" viewBox="0 0 15 15"><path d="M4 7.5 H11 M7.5 4 V11" stroke="#b0b0b0" stroke-width="1.5"/></svg>
<div class="t" style="left:55.0px;top:767.8px;font-size:16px;color:#484848;font-weight:400;font-style:normal;font-family:'Liberation Sans',sans-serif;transform:scaleX(1.1922);-webkit-text-stroke:0.3px #484848;">March</div>
<div class="b" style="left:28.0px;top:765.3px;width:20.0px;height:20.0px;background:#fff;border:2px solid #cfcfcf;box-sizing:border-box"></div>
<svg class="b" style="left:31px;top:767.8px" width="15" height="14" viewBox="0 0 15 14"><path d="M1.5 7.5 L5.5 11.5 L13.5 2" fill="none" stroke="#111" stroke-width="3"/></svg>
<div class="b" style="left:4.0px;top:767.8px;width:15.0px;height:15.0px;background:#fff;border:2px solid #c4c4c4;box-sizing:border-box"></div>
<div class="b" style="left:19.0px;top:774.3px;width:9.0px;height:1.0px;background:#d4d4d4"></div>
<svg class="b" style="left:4px;top:767.8px" width="15" height="15" viewBox="0 0 15 15"><path d="M4 7.5 H11 M7.5 4 V11" stroke="#b0b0b0" stroke-width="1.5"/></svg>
<div class="t" style="left:55.0px;top:796.3px;font-size:16px;color:#484848;font-weight:400;font-style:normal;font-family:'Liberation Sans',sans-serif;transform:scaleX(1.2496);-webkit-text-stroke:0.3px #484848;">April</div>
<div class="b" style="left:28.0px;top:793.8px;width:20.0px;height:20.0px;background:#fff;border:2px solid #cfcfcf;box-sizing:border-box"></div>
<svg class="b" style="left:31px;top:796.3px" width="15" height="14" viewBox="0 0 15 14"><path d="M1.5 7.5 L5.5 11.5 L13.5 2" fill="none" stroke="#111" stroke-width="3"/></svg>
<div class="b" style="left:4.0px;top:796.3px;width:15.0px;height:15.0px;background:#fff;border:2px solid #c4c4c4;box-sizing:border-box"></div>
<div class="b" style="left:19.0px;top:802.8px;width:9.0px;height:1.0px;background:#d4d4d4"></div>
<svg class="b" style="left:4px;top:796.3px" width="15" height="15" viewBox="0 0 15 15"><path d="M4 7.5 H11 M7.5 4 V11" stroke="#b0b0b0" stroke-width="1.5"/></svg>
<div class="t" style="left:55.0px;top:824.8px;font-size:16px;color:#484848;font-weight:400;font-style:normal;font-family:'Liberation Sans',sans-serif;transform:scaleX(1.1533);-webkit-text-stroke:0.3px #484848;">May</div>
<div class="b" style="left:28.0px;top:822.3px;width:20.0px;height:20.0px;background:#fff;border:2px solid #cfcfcf;box-sizing:border-box"></div>
<svg class="b" style="left:31px;top:824.8px" width="15" height="14" viewBox="0 0 15 14"><path d="M1.5 7.5 L5.5 11.5 L13.5 2" fill="none" stroke="#111" stroke-width="3"/></svg>
<div class="b" style="left:4.0px;top:824.8px;width:15.0px;height:15.0px;background:#fff;border:2px solid #c4c4c4;box-sizing:border-box"></div>
<div class="b" style="left:19.0px;top:831.3px;width:9.0px;height:1.0px;background:#d4d4d4"></div>
<svg class="b" style="left:4px;top:824.8px" width="15" height="15" viewBox="0 0 15 15"><path d="M4 7.5 H11 M7.5 4 V11" stroke="#b0b0b0" stroke-width="1.5"/></svg>
<div class="t" style="left:55.0px;top:853.3px;font-size:16px;color:#484848;font-weight:400;font-style:normal;font-family:'Liberation Sans',sans-serif;transform:scaleX(1.2055);-webkit-text-stroke:0.3px #484848;">June</div>
<div class="b" style="left:28.0px;top:850.8px;width:20.0px;height:20.0px;background:#fff;border:2px solid #cfcfcf;box-sizing:border-box"></div>
<svg class="b" style="left:31px;top:853.3px" width="15" height="14" viewBox="0 0 15 14"><path d="M1.5 7.5 L5.5 11.5 L13.5 2" fill="none" stroke="#111" stroke-width="3"/></svg>
<div class="b" style="left:4.0px;top:853.3px;width:15.0px;height:15.0px;background:#fff;border:2px solid #c4c4c4;box-sizing:border-box"></div>
<div class="b" style="left:19.0px;top:859.8px;width:9.0px;height:1.0px;background:#d4d4d4"></div>
<svg class="b" style="left:4px;top:853.3px" width="15" height="15" viewBox="0 0 15 15"><path d="M4 7.5 H11 M7.5 4 V11" stroke="#b0b0b0" stroke-width="1.5"/></svg>
<div class="t" style="left:55.0px;top:881.8px;font-size:16px;color:#484848;font-weight:400;font-style:normal;font-family:'Liberation Sans',sans-serif;transform:scaleX(1.2602);-webkit-text-stroke:0.3px #484848;">July</div>
<div class="b" style="left:28.0px;top:879.3px;width:20.0px;height:20.0px;background:#fff;border:2px solid #cfcfcf;box-sizing:border-box"></div>
<svg class="b" style="left:31px;top:881.8px" width="15" height="14" viewBox="0 0 15 14"><path d="M1.5 7.5 L5.5 11.5 L13.5 2" fill="none" stroke="#111" stroke-width="3"/></svg>
<div class="b" style="left:4.0px;top:881.8px;width:15.0px;height:15.0px;background:#fff;border:2px solid #c4c4c4;box-sizing:border-box"></div>
<div class="b" style="left:19.0px;top:888.3px;width:9.0px;height:1.0px;background:#d4d4d4"></div>
<svg class="b" style="left:4px;top:881.8px" width="15" height="15" viewBox="0 0 15 15"><path d="M4 7.5 H11 M7.5 4 V11" stroke="#b0b0b0" stroke-width="1.5"/></svg>
<div class="t" style="left:55.0px;top:910.3px;font-size:16px;color:#484848;font-weight:400;font-style:normal;font-family:'Liberation Sans',sans-serif;transform:scaleX(1.2389);-webkit-text-stroke:0.3px #484848;">August</div>
<div class="b" style="left:28.0px;top:907.8px;width:20.0px;height:20.0px;background:#fff;border:2px solid #cfcfcf;box-sizing:border-box"></div>
<svg class="b" style="left:31px;top:910.3px" width="15" height="14" viewBox="0 0 15 14"><path d="M1.5 7.5 L5.5 11.5 L13.5 2" fill="none" stroke="#111" stroke-width="3"/></svg>
<div class="b" style="left:4.0px;top:910.3px;width:15.0px;height:15.0px;background:#fff;border:2px solid #c4c4c4;box-sizing:border-box"></div>
<div class="b" style="left:19.0px;top:916.8px;width:9.0px;height:1.0px;background:#d4d4d4"></div>
<svg class="b" style="left:4px;top:910.3px" width="15" height="15" viewBox="0 0 15 15"><path d="M4 7.5 H11 M7.5 4 V11" stroke="#b0b0b0" stroke-width="1.5"/></svg>
<div class="t" style="left:55.0px;top:938.8px;font-size:16px;color:#484848;font-weight:400;font-style:normal;font-family:'Liberation Sans',sans-serif;transform:scaleX(1.2265);-webkit-text-stroke:0.3px #484848;">September</div>
<div class="b" style="left:28.0px;top:936.3px;width:20.0px;height:20.0px;background:#fff;border:2px solid #cfcfcf;box-sizing:border-box"></div>
<svg class="b" style="left:31px;top:938.8px" width="15" height="14" viewBox="0 0 15 14"><path d="M1.5 7.5 L5.5 11.5 L13.5 2" fill="none" stroke="#111" stroke-width="3"/></svg>
<div class="b" style="left:4.0px;top:938.8px;width:15.0px;height:15.0px;background:#fff;border:2px solid #c4c4c4;box-sizing:border-box"></div>
<div class="b" style="left:19.0px;top:945.3px;width:9.0px;height:1.0px;background:#d4d4d4"></div>
<svg class="b" style="left:4px;top:938.8px" width="15" height="15" viewBox="0 0 15 15"><path d="M4 7.5 H11 M7.5 4 V11" stroke="#b0b0b0" stroke-width="1.5"/></svg>
<div class="t" style="left:55.0px;top:967.3px;font-size:16px;color:#484848;font-weight:400;font-style:normal;font-family:'Liberation Sans',sans-serif;transform:scaleX(1.2072);-webkit-text-stroke:0.3px #484848;">October</div>
<div class="b" style="left:28.0px;top:964.8px;width:20.0px;height:20.0px;background:#fff;border:2px solid #cfcfcf;box-sizing:border-box"></div>
<svg class="b" style="left:31px;top:967.3px" width="15" height="14" viewBox="0 0 15 14"><path d="M1.5 7.5 L5.5 11.5 L13.5 2" fill="none" stroke="#111" stroke-width="3"/></svg>
<div class="b" style="left:4.0px;top:967.3px;width:15.0px;height:15.0px;background:#fff;border:2px solid #c4c4c4;box-sizing:border-box"></div>
<div class="b" style="left:19.0px;top:973.8px;width:9.0px;height:1.0px;background:#d4d4d4"></div>
<svg class="b" style="left:4px;top:967.3px" width="15" height="15" viewBox="0 0 15 15"><path d="M4 7.5 H11 M7.5 4 V11" stroke="#b0b0b0" stroke-width="1.5"/></svg>
<svg class="b" style="left:-4px;top:676px" width="14" height="16" viewBox="0 0 14 16"><path d="M1.5 8 L5.5 12 L13 3" fill="none" stroke="#111" stroke-width="3"/></svg>
<div class="b" style="left:330.0px;top:668.0px;width:33.0px;height:340.0px;background:#f5f5f5"></div>
<div class="b" style="left:332.0px;top:724.0px;width:27.0px;height:179.0px;background:linear-gradient(90deg,#e2e2e2,#f4f4f4 40%,#d8d8d8);border:1.5px solid #c4c4c4;box-sizing:border-box;border-radius:2px"></div>
<svg class="b" style="left:341px;top:687px" width="10" height="7" viewBox="0 0 10 7"><path d="M1 6 L5 1 L9 6 Z" fill="#555"/></svg>
<svg class="b" style="left:341px;top:950px" width="10" height="7" viewBox="0 0 10 7"><path d="M1 1 L9 1 L5 6 Z" fill="#555"/></svg>
<svg class="b" style="left:340px;top:806px" width="10" height="14" viewBox="0 0 10 14"><path d="M1 2 H9 M1 5 H9 M1 8 H9 M1 11 H9" stroke="#aaa" stroke-width="1.5"/></svg>
</div></div></body></html>
